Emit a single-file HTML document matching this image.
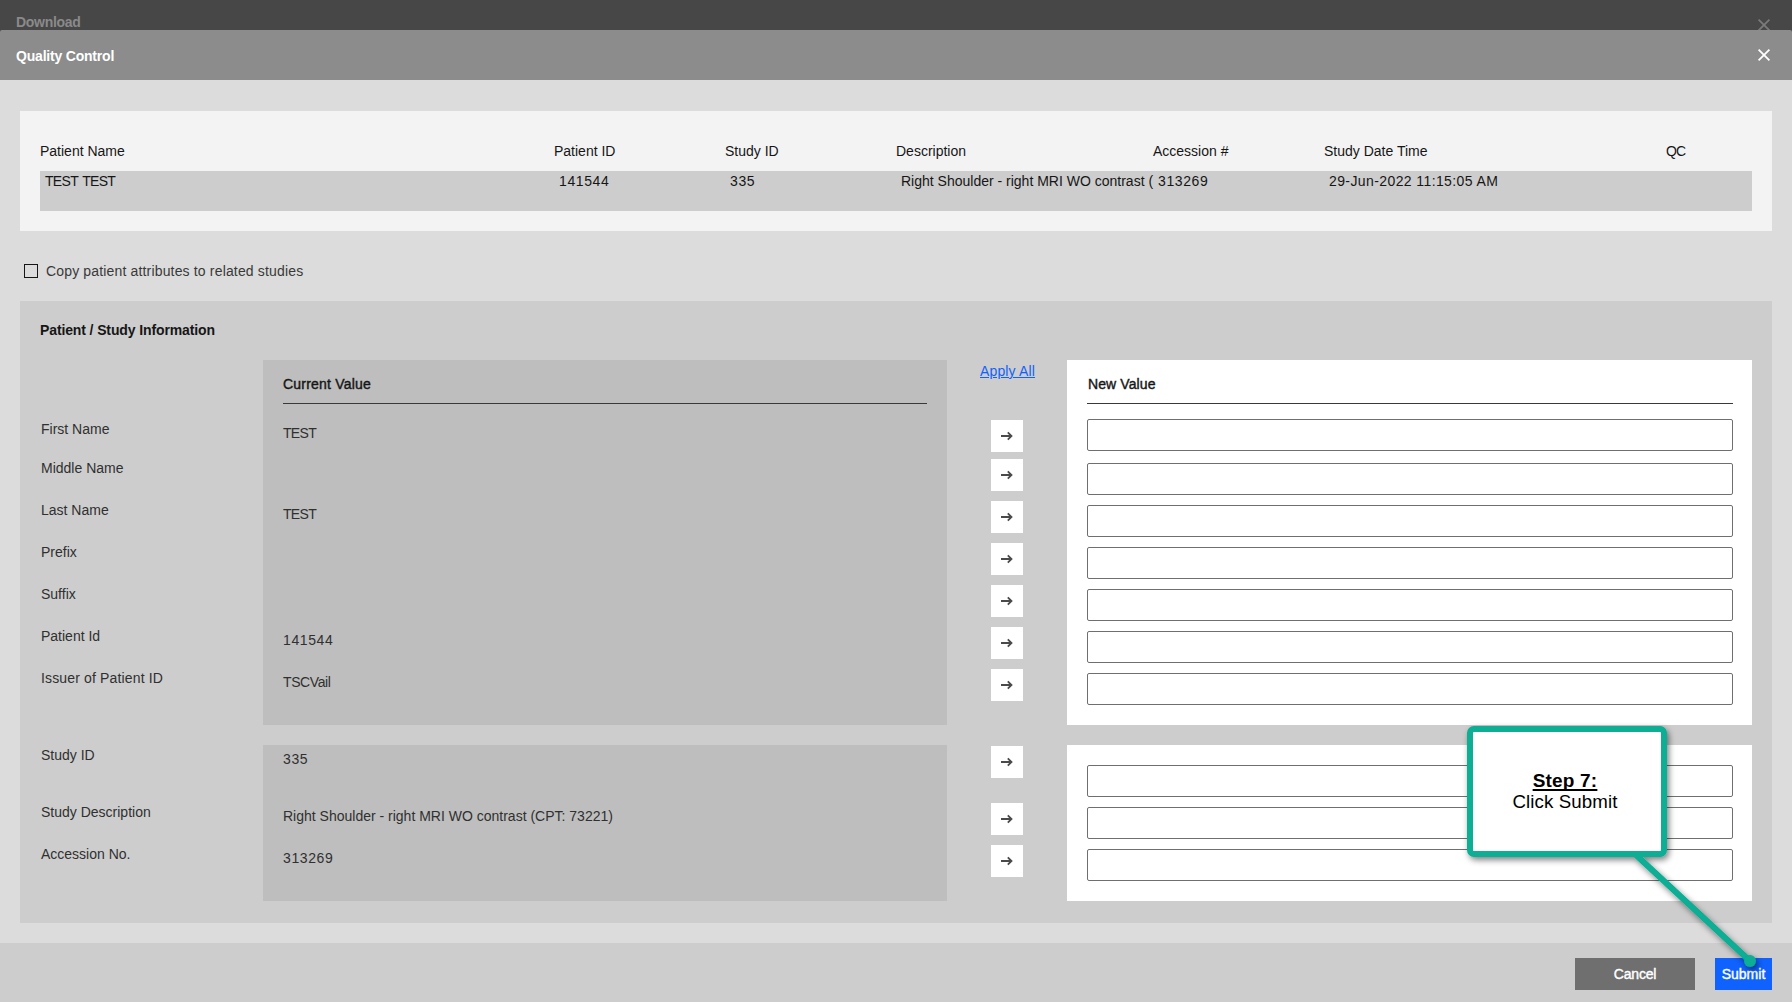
<!DOCTYPE html>
<html><head><meta charset="utf-8">
<style>
*{box-sizing:border-box;margin:0;padding:0}
html,body{width:1792px;height:1002px;overflow:hidden;background:#dcdcdc;font-family:"Liberation Sans",sans-serif;font-size:14px;color:#161616}
.a{position:absolute;white-space:pre;line-height:1}
.topbar{position:absolute;left:0;top:0;width:1792px;height:34px;background:#474747}
.hdr{position:absolute;left:0;top:30px;width:1792px;height:50px;background:#8c8c8c;border-radius:2px 2px 0 0}
.body{position:absolute;left:0;top:80px;width:1792px;height:863px;background:#dcdcdc}
.card{position:absolute;left:20px;top:111px;width:1752px;height:120px;background:#f3f3f3}
.row{position:absolute;left:40px;top:171px;width:1712px;height:40px;background:#cdcdcd}
.panel{position:absolute;left:20px;top:301px;width:1752px;height:622px;background:#cdcdcd}
.cur{position:absolute;left:263px;width:684px;background:#bebebe}
.nv{position:absolute;left:1067px;width:685px;background:#fff}
.btn{position:absolute;left:991px;width:32px;height:32px;background:#fff}
.btn svg{position:absolute;left:0;top:0}
.inp{position:absolute;left:1087px;width:646px;height:32px;border:1px solid #6f6f6f;border-radius:2px;background:#fff}
.footer{position:absolute;left:0;top:943px;width:1792px;height:59px;background:#cdcdcd}
.lbl{color:#303030}
.val{color:#303030}
</style></head><body>
<div class="topbar"></div>
<div class="a" style="left:16px;top:15px;font-weight:700;color:#8a8a8a;letter-spacing:-0.3px">Download</div>
<svg class="a" style="left:1757px;top:18px" width="14" height="14" viewBox="0 0 14 14"><path d="M1.6 1.6L12.4 12.4M12.4 1.6L1.6 12.4" stroke="#7a7a7a" stroke-width="1.8"/></svg>
<div class="hdr"></div>
<div class="a" style="left:16px;top:49px;font-weight:700;color:#fff;letter-spacing:-0.2px">Quality Control</div>
<svg class="a" style="left:1757px;top:48px" width="14" height="14" viewBox="0 0 14 14"><path d="M1.6 1.6L12.4 12.4M12.4 1.6L1.6 12.4" stroke="#fff" stroke-width="1.8"/></svg>
<div class="body"></div>

<div class="card"></div>
<div class="row"></div>
<div class="a" style="left:40px;top:144px">Patient Name</div>
<div class="a" style="left:554px;top:144px">Patient ID</div>
<div class="a" style="left:725px;top:144px">Study ID</div>
<div class="a" style="left:896px;top:144px">Description</div>
<div class="a" style="left:1153px;top:144px">Accession #</div>
<div class="a" style="left:1324px;top:144px">Study Date Time</div>
<div class="a" style="left:1666px;top:144px;letter-spacing:-0.8px">QC</div>
<div class="a" style="left:45px;top:174px;letter-spacing:-0.7px;word-spacing:1.5px">TEST TEST</div>
<div class="a" style="left:559px;top:174px;letter-spacing:0.6px">141544</div>
<div class="a" style="left:730px;top:174px;letter-spacing:0.6px">335</div>
<div class="a" style="left:901px;top:174px">Right Shoulder - right MRI WO contrast (</div>
<div class="a" style="left:1158px;top:174px;letter-spacing:0.6px">313269</div>
<div class="a" style="left:1329px;top:174px;letter-spacing:0.4px">29-Jun-2022 11:15:05 AM</div>

<div class="a" style="left:24px;top:264px;width:14px;height:14px;border:1px solid #161616"></div>
<div class="a" style="left:46px;top:264px;color:#393939;letter-spacing:0.16px">Copy patient attributes to related studies</div>

<div class="panel"></div>
<div class="a" style="left:40px;top:323px;font-weight:700;letter-spacing:-0.12px">Patient / Study Information</div>

<div class="cur" style="top:360px;height:365px"></div>
<div class="cur" style="top:745px;height:156px"></div>
<div class="a" style="left:283px;top:377px;-webkit-text-stroke:0.4px #161616;letter-spacing:0.2px">Current Value</div>
<div class="a" style="left:283px;top:403px;width:644px;height:1px;background:#393939"></div>

<div class="nv" style="top:360px;height:365px"></div>
<div class="nv" style="top:745px;height:156px"></div>
<div class="a" style="left:1088px;top:377px;-webkit-text-stroke:0.4px #161616;letter-spacing:0.1px">New Value</div>
<div class="a" style="left:1087px;top:403px;width:646px;height:1px;background:#393939"></div>

<div class="a" style="left:980px;top:364px;color:#0f62fe;text-decoration:underline;letter-spacing:0.15px">Apply All</div>

<!-- labels -->
<div class="a lbl" style="left:41px;top:422px">First Name</div>
<div class="a lbl" style="left:41px;top:461px">Middle Name</div>
<div class="a lbl" style="left:41px;top:503px">Last Name</div>
<div class="a lbl" style="left:41px;top:545px">Prefix</div>
<div class="a lbl" style="left:41px;top:587px">Suffix</div>
<div class="a lbl" style="left:41px;top:629px">Patient Id</div>
<div class="a lbl" style="left:41px;top:671px;letter-spacing:0.15px">Issuer of Patient ID</div>
<div class="a lbl" style="left:41px;top:748px">Study ID</div>
<div class="a lbl" style="left:41px;top:805px">Study Description</div>
<div class="a lbl" style="left:41px;top:847px">Accession No.</div>

<!-- values -->
<div class="a val" style="left:283px;top:426px;letter-spacing:-0.7px">TEST</div>
<div class="a val" style="left:283px;top:507px;letter-spacing:-0.7px">TEST</div>
<div class="a val" style="left:283px;top:633px;letter-spacing:0.6px">141544</div>
<div class="a val" style="left:283px;top:675px;letter-spacing:-0.4px">TSCVail</div>
<div class="a val" style="left:283px;top:752px;letter-spacing:0.6px">335</div>
<div class="a val" style="left:283px;top:809px">Right Shoulder - right MRI WO contrast (CPT: 73221)</div>
<div class="a val" style="left:283px;top:851px;letter-spacing:0.6px">313269</div>

<!-- arrow buttons -->
<div class="btn" style="top:420px"><svg width="32" height="32" viewBox="0 0 32 32"><path d="M10 16H20.5M16.8 12.3L20.5 16L16.8 19.7" fill="none" stroke="#4a4a4a" stroke-width="1.8"/></svg></div>
<div class="btn" style="top:459px"><svg width="32" height="32" viewBox="0 0 32 32"><path d="M10 16H20.5M16.8 12.3L20.5 16L16.8 19.7" fill="none" stroke="#4a4a4a" stroke-width="1.8"/></svg></div>
<div class="btn" style="top:501px"><svg width="32" height="32" viewBox="0 0 32 32"><path d="M10 16H20.5M16.8 12.3L20.5 16L16.8 19.7" fill="none" stroke="#4a4a4a" stroke-width="1.8"/></svg></div>
<div class="btn" style="top:543px"><svg width="32" height="32" viewBox="0 0 32 32"><path d="M10 16H20.5M16.8 12.3L20.5 16L16.8 19.7" fill="none" stroke="#4a4a4a" stroke-width="1.8"/></svg></div>
<div class="btn" style="top:585px"><svg width="32" height="32" viewBox="0 0 32 32"><path d="M10 16H20.5M16.8 12.3L20.5 16L16.8 19.7" fill="none" stroke="#4a4a4a" stroke-width="1.8"/></svg></div>
<div class="btn" style="top:627px"><svg width="32" height="32" viewBox="0 0 32 32"><path d="M10 16H20.5M16.8 12.3L20.5 16L16.8 19.7" fill="none" stroke="#4a4a4a" stroke-width="1.8"/></svg></div>
<div class="btn" style="top:669px"><svg width="32" height="32" viewBox="0 0 32 32"><path d="M10 16H20.5M16.8 12.3L20.5 16L16.8 19.7" fill="none" stroke="#4a4a4a" stroke-width="1.8"/></svg></div>
<div class="btn" style="top:746px"><svg width="32" height="32" viewBox="0 0 32 32"><path d="M10 16H20.5M16.8 12.3L20.5 16L16.8 19.7" fill="none" stroke="#4a4a4a" stroke-width="1.8"/></svg></div>
<div class="btn" style="top:803px"><svg width="32" height="32" viewBox="0 0 32 32"><path d="M10 16H20.5M16.8 12.3L20.5 16L16.8 19.7" fill="none" stroke="#4a4a4a" stroke-width="1.8"/></svg></div>
<div class="btn" style="top:845px"><svg width="32" height="32" viewBox="0 0 32 32"><path d="M10 16H20.5M16.8 12.3L20.5 16L16.8 19.7" fill="none" stroke="#4a4a4a" stroke-width="1.8"/></svg></div>
<!-- inputs -->
<div class="inp" style="top:419px"></div>
<div class="inp" style="top:463px"></div>
<div class="inp" style="top:505px"></div>
<div class="inp" style="top:547px"></div>
<div class="inp" style="top:589px"></div>
<div class="inp" style="top:631px"></div>
<div class="inp" style="top:673px"></div>
<div class="inp" style="top:765px"></div>
<div class="inp" style="top:807px"></div>
<div class="inp" style="top:849px"></div>

<div class="footer"></div>
<div class="a" style="left:1575px;top:958px;width:120px;height:32px;background:#6f6f6f"></div>
<div class="a" style="left:1575px;top:967px;width:120px;text-align:center;color:#fff;-webkit-text-stroke:0.4px #fff;letter-spacing:-0.2px">Cancel</div>
<div class="a" style="left:1715px;top:958px;width:57px;height:32px;background:#0f62fe"></div>
<div class="a" style="left:1715px;top:967px;width:57px;text-align:center;color:#fff;-webkit-text-stroke:0.4px #fff">Submit</div>

<svg class="a" style="left:0;top:0" width="1792" height="1002" viewBox="0 0 1792 1002">
<defs><filter id="sh" x="-20%" y="-20%" width="140%" height="140%"><feGaussianBlur in="SourceAlpha" stdDeviation="3"/><feOffset dx="2" dy="3"/><feComponentTransfer><feFuncA type="linear" slope="0.5"/></feComponentTransfer><feMerge><feMergeNode/><feMergeNode in="SourceGraphic"/></feMerge></filter></defs>
<g filter="url(#sh)">
<line x1="1636" y1="855" x2="1750" y2="961" stroke="#07ae94" stroke-width="6"/>
<circle cx="1750" cy="961" r="6" fill="#07ae94"/>
<rect x="1470" y="729" width="194" height="125" rx="4" fill="#fff" stroke="#07ae94" stroke-width="6"/>
</g>
</svg>
<div class="a" style="left:1467px;top:771px;width:196px;text-align:center;font-size:19px;font-weight:700;color:#000;text-decoration:underline;text-decoration-thickness:1.5px;text-underline-offset:2px;text-decoration-skip-ink:none;letter-spacing:0.2px">Step 7:</div>
<div class="a" style="left:1467px;top:793px;width:196px;text-align:center;font-size:18.7px;color:#000;letter-spacing:0.1px">Click Submit</div>

</body></html>
